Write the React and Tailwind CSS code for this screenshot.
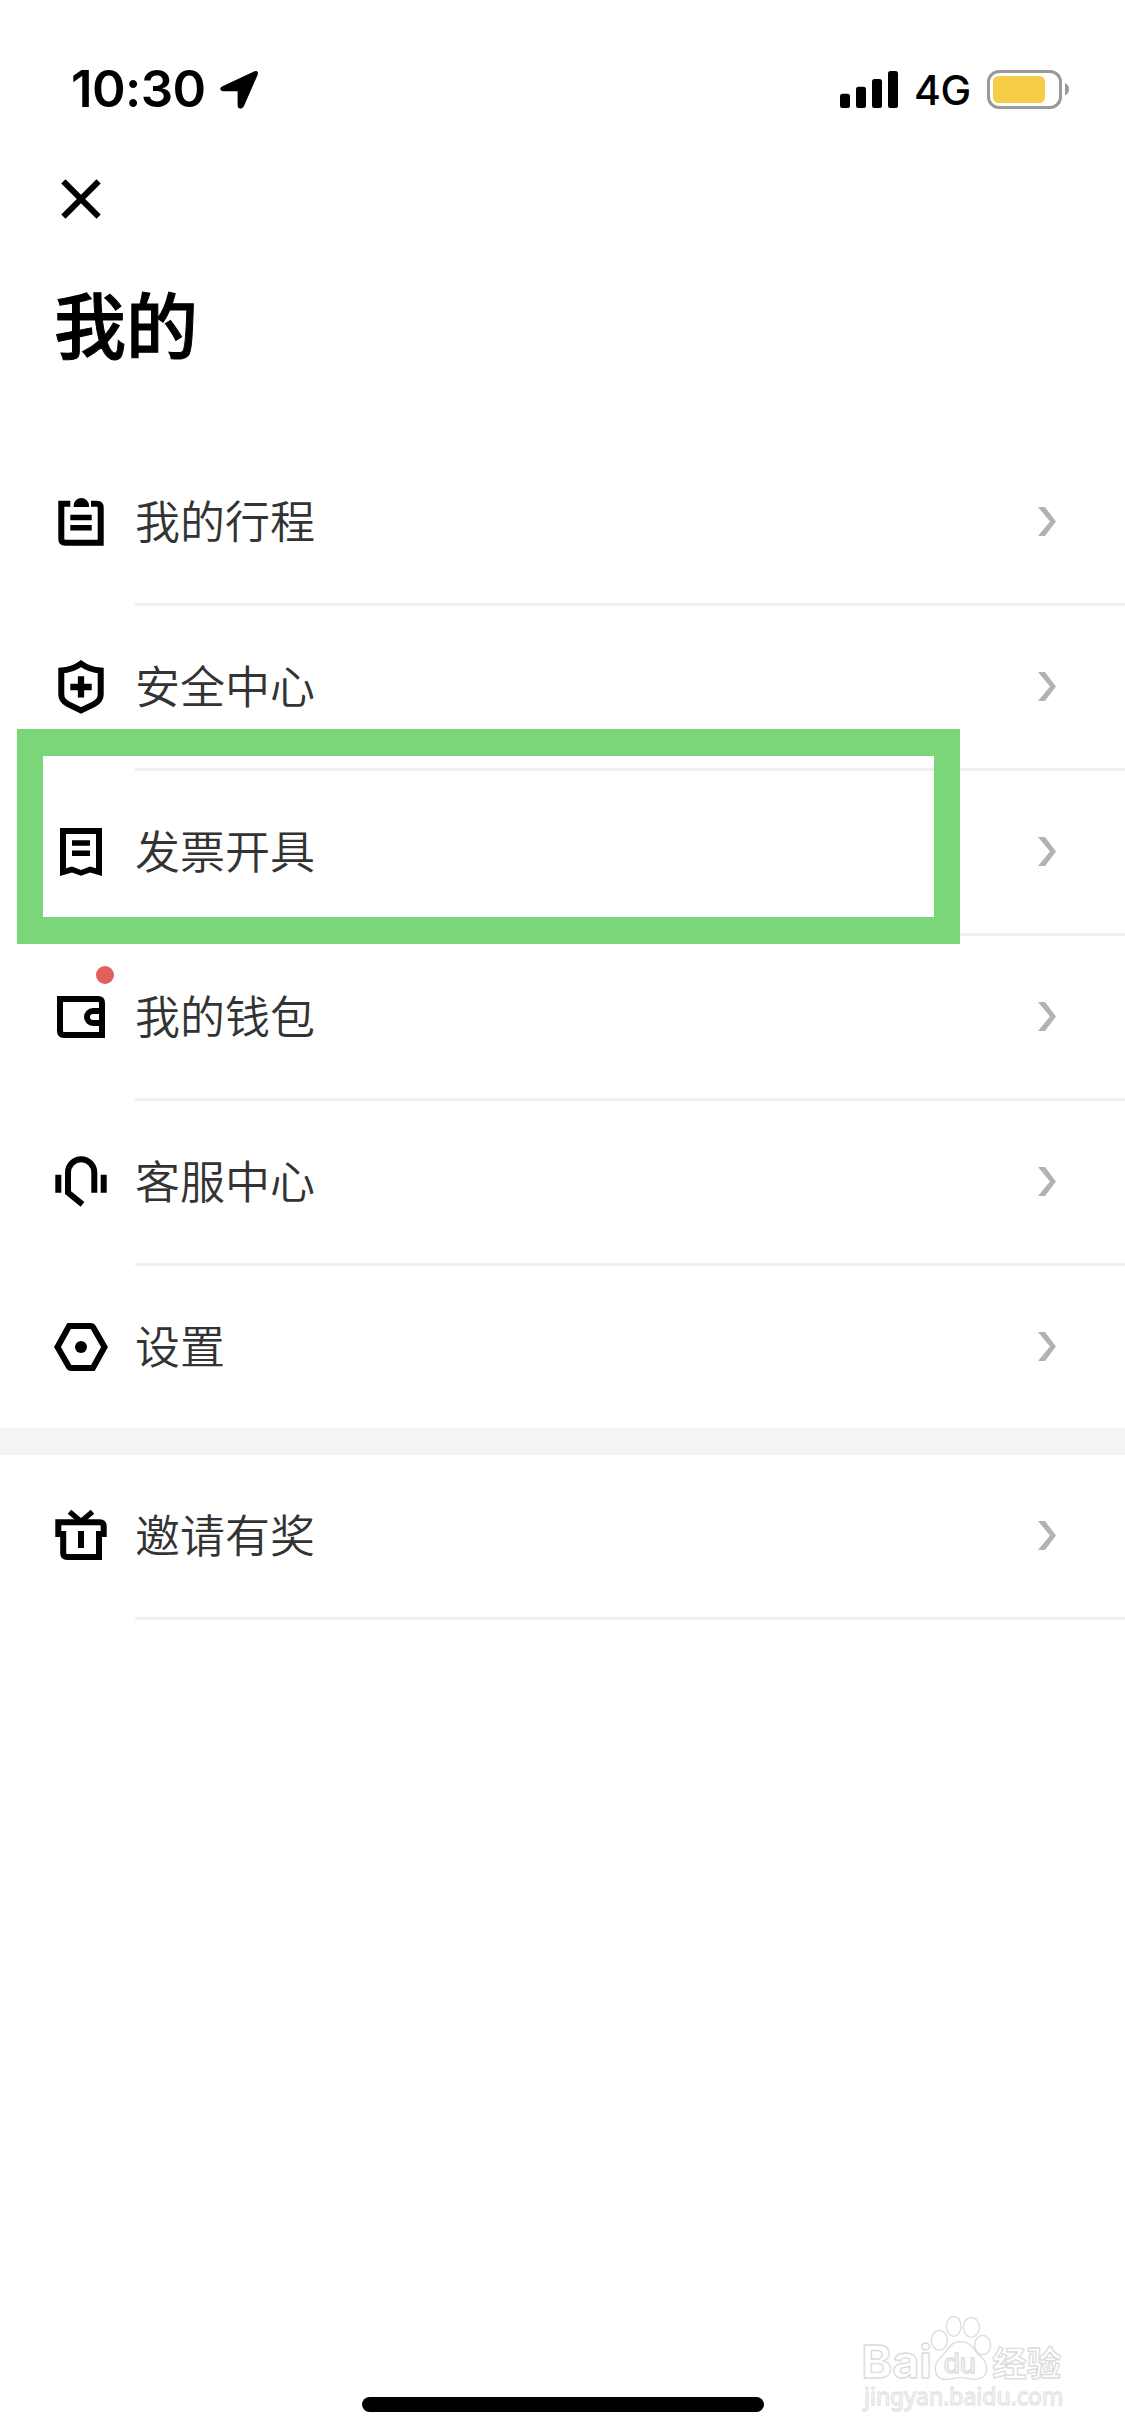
/* src/pages/Mine.jsx */
import React from 'react';

/* ─── menu icons (54 × 54 grid) ────────────────────────────── */
const Icon = ({ children }) => (
  <svg viewBox="0 0 54 54" className="size-[54px] shrink-0" fill="none"
       stroke="#000" strokeWidth="6">
    {children}
  </svg>
);

const TripIcon = () => (
  <Icon>
    <path d="M16.3 8.7H7.3V43.7Q7.3 47.7 11.3 47.7H46.7V12.7Q46.7 8.7 42.7 8.7H37"/>
    <path d="M19.7 12V10.5A7.65 7.5 0 0 1 35 10.5V12Z" fill="#000" stroke="none"/>
    <path d="M16.3 22.5H37.7M16.3 32.8H37.7" strokeWidth="5.6"/>
  </Icon>
);

const ShieldIcon = () => (
  <Icon>
    <path d="M27 3.6C21.5 7.6 15 10.2 7.3 10.6V34.5C7.3 39.5 10 42 14 44.2L27 50.4L40 44.2C44 42 46.7 39.5 46.7 34.5V10.6C39 10.2 32.5 7.6 27 3.6Z"/>
    <path d="M16.3 27H37.7M27 16.3V37.5" strokeWidth="6.3"/>
  </Icon>
);

const InvoiceIcon = () => (
  <Icon>
    <path fill="#000" stroke="none" fillRule="evenodd"
          d="M6 3H48V51L36 47.4L27 50.8L18 47.4L6 51ZM12 9V43.3L18 41.6L27 45L36 41.6L42 43.3V9Z"/>
    <path d="M18 18H36M18 28.3H36" strokeWidth="5.6"/>
  </Icon>
);

const WalletIcon = () => (
  <Icon>
    <path d="M6 9H44Q48 9 48 13V45H10Q6 45 6 41Z"/>
    <path d="M48 21H39A6 6 0 0 0 39 33H48"/>
  </Icon>
);

const ServiceIcon = () => (
  <Icon>
    <path d="M4.3 19.7V37.7M49.7 19.7V37.7"/>
    <path d="M40.3 37.7V17.5A13.15 13.15 0 0 0 14 17.5V37.6L28.5 49.4"/>
  </Icon>
);

const SettingsIcon = () => (
  <Icon>
    <path d="M15.1 6H36.5Q38.4 6 39.4 7.7L50.5 27L38.9 48H17.5Q15.6 48 14.6 46.3L3.5 27Z"/>
    <circle cx="27" cy="27" r="6" fill="#000" stroke="none"/>
  </Icon>
);

const GiftIcon = () => (
  <Icon>
    <path d="M4.3 28V13.3H45.7Q49.7 13.3 49.7 17.3V28"/>
    <path d="M9.2 22V44Q9.2 48 13.2 48H45V22"/>
    <path d="M7 22H12V28H4M47 22H42V28H50Z" fill="#000" stroke="none"/>
    <path d="M27 22V39"/>
    <path d="M15.5 2.7L27 12.5L38.5 2.7" strokeWidth="5.4"/>
  </Icon>
);

const Chevron = () => (
  <svg viewBox="0 0 18 29" className="mb-px h-[29px] w-[18px]" fill="#b2b2b2">
    <path d="M0 0H7L18 14.5L7 29H0L12 14.5Z"/>
  </svg>
);

/* ─── menu data ────────────────────────────────────────────── */
const MAIN = [
  { label: '我的行程', icon: TripIcon },
  { label: '安全中心', icon: ShieldIcon },
  { label: '发票开具', icon: InvoiceIcon, marked: true },
  { label: '我的钱包', icon: WalletIcon, dot: true },
  { label: '客服中心', icon: ServiceIcon },
  { label: '设置',     icon: SettingsIcon, last: true },
];
const EXTRA = [{ label: '邀请有奖', icon: GiftIcon }];

const Row = ({ label, icon: Glyph, marked, dot, last }) => (
  <li className="relative flex pl-[54px]">
    <div className="relative flex h-[162px] w-[81px] items-center">
      <Glyph/>
      {dot && <span className="absolute left-[42px] top-[30px] size-[18px] rounded-full bg-[#e2605c]"/>}
    </div>
    <div className={`flex flex-1 items-center justify-between pr-[69px]
        ${last ? 'h-[162px]' : 'h-[165px] border-b-[3px] border-[#f0f0f0]'}`}>
      <span className="pt-[3px] text-[45px] font-[350] leading-none text-[#333]">{label}</span>
      <Chevron/>
    </div>
    {/* highlight frame over the row */}
    {marked && (
      <div className="absolute -top-[42px] left-[17px] z-10 h-[215px] w-[943px]
                      border-x-[26px] border-y-[27px] border-[#7ad678]"/>
    )}
  </li>
);

/* ─── status bar ───────────────────────────────────────────── */
const StatusBar = () => (
  <header className="flex h-[178px] items-start justify-between pl-[71px] pr-[56px] pt-[69px]">
    <div className="flex h-10 items-center">
      <span className="w-[149px] font-['Inter',sans-serif] text-[51px] font-semibold leading-10 tracking-[-0.6px]">10:30</span>
      <svg viewBox="0 0 39 39" className="size-[39px]">
        <path d="M3 16L34.5 1.3Q38.8 0 37.8 4.5L24 36Q22.5 39 20 38.6Q17.6 38 17.6 35.5V21.3H3.5Q.4 21 .2 18.8Q.3 17.2 3 16Z"/>
      </svg>
    </div>
    <div className="flex h-10 items-center">
      <svg viewBox="0 0 58 37" className="h-[37px] w-[58px]">
        <rect x="0" y="22.7" width="10" height="14.3" rx="2.5"/>
        <rect x="16" y="15.7" width="10" height="21.3" rx="2.5"/>
        <rect x="32" y="8" width="10" height="29" rx="2.5"/>
        <rect x="48" y="0" width="10" height="37" rx="2.5"/>
      </svg>
      <span className="ml-[16px] w-[73px] pt-[2px] font-['Inter',sans-serif] text-[41px] font-medium leading-10 tracking-[-0.5px]">4G</span>
      <svg viewBox="0 0 82 39" className="h-[39px] w-[82px]">
        <rect x="1.5" y="1.5" width="72" height="36" rx="10.5" fill="none" stroke="#999" strokeWidth="3"/>
        <rect x="6" y="6" width="52" height="27" rx="5.5" fill="#f5cd46"/>
        <path d="M78 13Q82 15 82 19.3T78 25.5Z" fill="#999"/>
      </svg>
    </div>
  </header>
);

/* ─── outlined site mark, bottom right ─────────────────────── */
const SiteMark = () => (
  <svg viewBox="45 60 645 330" className="absolute left-[855px] top-[2310px] h-[110px] w-[215px] overflow-visible"
       fill="#fff" stroke="#dcdcdc" strokeWidth="4" strokeLinejoin="round">
    <text x="64" y="264" fontSize="136" fontWeight="700" textLength="212" lengthAdjust="spacingAndGlyphs"
          className="font-['Inter',sans-serif]">Bai</text>
    <ellipse cx="298" cy="151" rx="24" ry="30"/>
    <ellipse cx="341" cy="109" rx="22" ry="30"/>
    <ellipse cx="394" cy="112" rx="24" ry="30"/>
    <ellipse cx="428" cy="165" rx="24" ry="29"/>
    <path d="M362 154C392 154 400 178 418 196C432 209 440 218 440 236C440 258 424 268 405 268C390 268 380 263 362 263C344 263 334 268 319 268C300 268 286 258 286 236C286 218 295 209 308 196C325 178 332 154 362 154Z"/>
    <text x="311" y="249" fontSize="84" textLength="97" lengthAdjust="spacingAndGlyphs"
          className="font-['Liberation_Sans',sans-serif]">du</text>
    <text x="457" y="257" fontSize="103" fontWeight="700" textLength="206" lengthAdjust="spacingAndGlyphs"
          className="font-['Noto_Sans_CJK_SC',sans-serif]">经验</text>
    <text x="72" y="345" fontSize="73" textLength="598" lengthAdjust="spacingAndGlyphs"
          stroke="#e4e4e4" className="font-['Noto_Sans',sans-serif]">jingyan.baidu.com</text>
  </svg>
);

/* ─── page ─────────────────────────────────────────────────── */
export default function Mine() {
  return (
    <main className="relative flex h-[2436px] w-[1125px] flex-col overflow-hidden bg-white
                     font-['Liberation_Sans','Noto_Sans_CJK_SC',sans-serif] text-black">
      <StatusBar/>

      {/* close + heading */}
      <div className="flex h-[263px] flex-col items-start pl-[54px]">
        <button type="button" aria-label="close" className="ml-[7px] mt-px size-10">
          <svg viewBox="0 0 40 40" className="size-10" fill="none" stroke="#000" strokeWidth="6">
            <path d="M2.4 2.4L37.6 37.6M37.6 2.4L2.4 37.6"/>
          </svg>
        </button>
        <h1 className="mt-[73px] text-[72px] font-medium leading-[72px] [-webkit-text-stroke:1px_#000]">我的</h1>
      </div>

      <ul>{MAIN.map(item => <Row key={item.label} {...item}/>)}</ul>
      <div className="h-[27px] bg-[#f4f4f4]"/>
      <ul>{EXTRA.map(item => <Row key={item.label} {...item}/>)}</ul>

      <SiteMark/>

      {/* home indicator */}
      <div className="mb-[24px] ml-[362px] mt-auto h-[15px] w-[402px] rounded-full bg-black"/>
    </main>
  );
}
